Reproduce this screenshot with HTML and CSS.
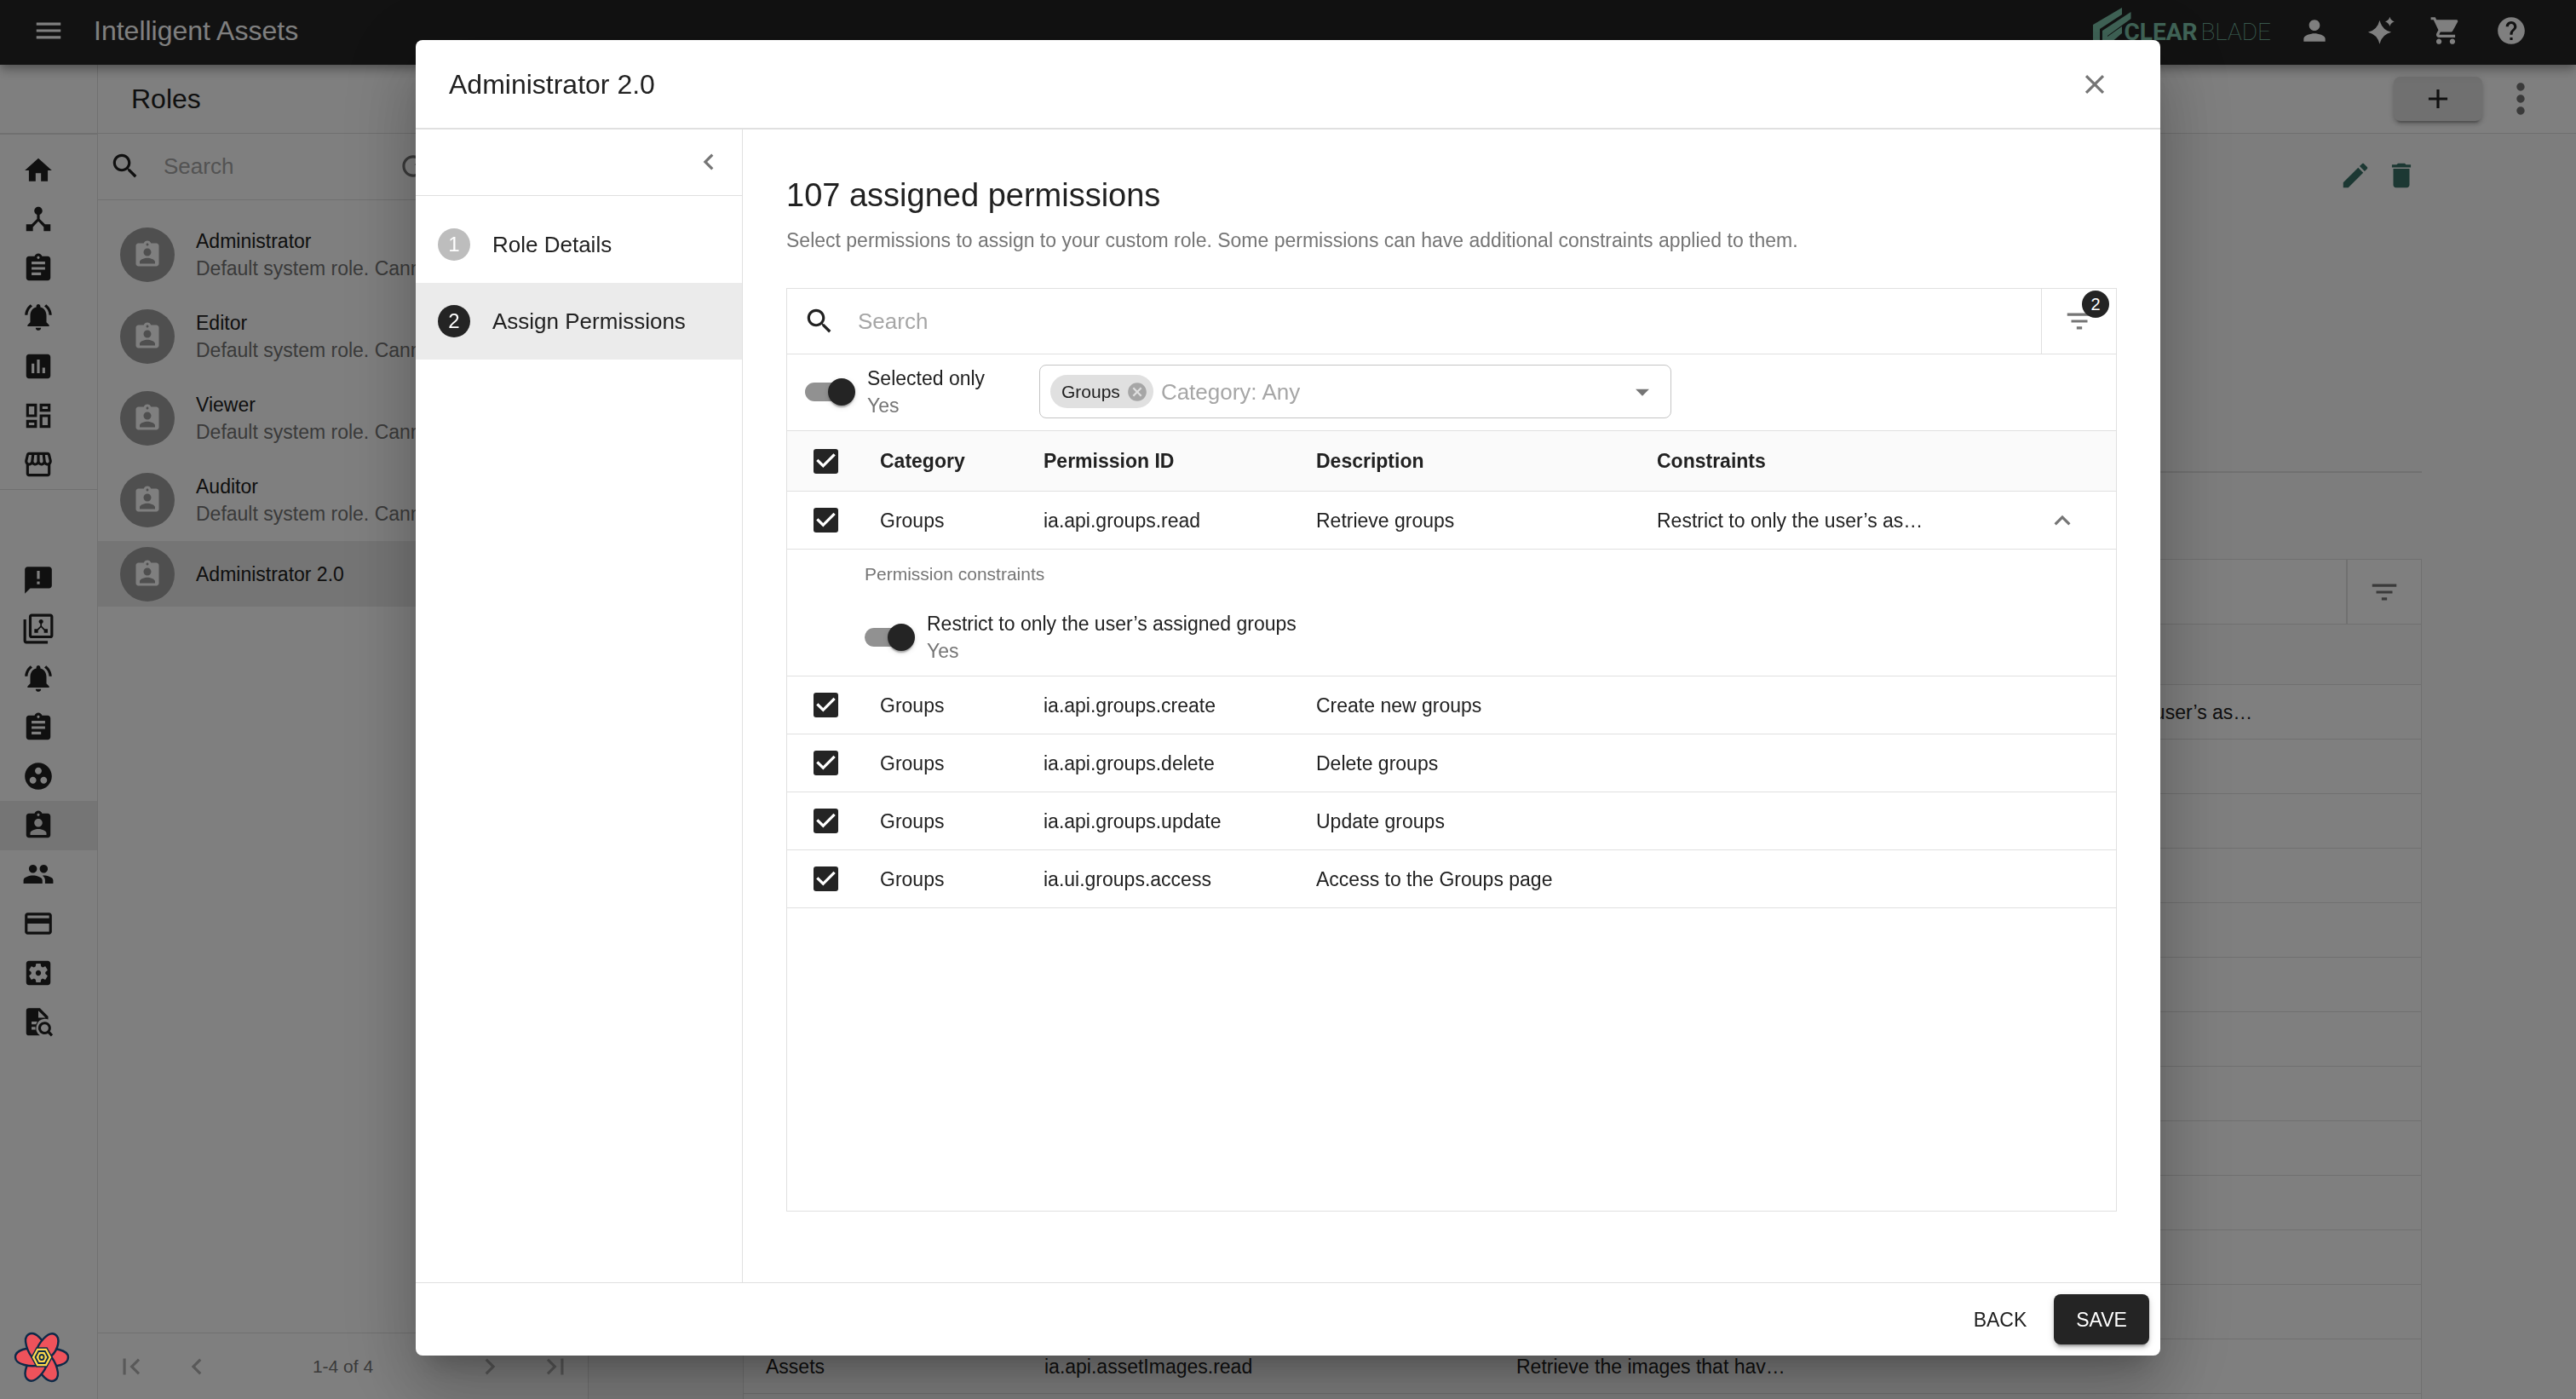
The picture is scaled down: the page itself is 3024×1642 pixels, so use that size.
FILE: index.html
```html
<!DOCTYPE html>
<html lang="en">
<head>
<meta charset="utf-8">
<meta name="viewport" content="width=device-width, initial-scale=1">
<title>Roles - Intelligent Assets</title>
<link rel="stylesheet" href="styles.css">
</head>
<body>
<svg class="sprite" aria-hidden="true">
  <symbol id="i-menu" viewBox="0 0 24 24"><path d="M3 18h18v-2H3v2zm0-5h18v-2H3v2zm0-7v2h18V6H3z"/></symbol>
  <symbol id="i-home" viewBox="0 0 24 24"><path d="M10 20v-6h4v6h5v-8h3L12 3 2 12h3v8z"/></symbol>
  <symbol id="i-hub" viewBox="0 0 24 24"><path d="M17 16l-4-4V8.82C14.16 8.4 15 7.3 15 6c0-1.66-1.34-3-3-3S9 4.34 9 6c0 1.3.84 2.4 2 2.82V12l-4 4H3v5h5v-3.05l4-4.2 4 4.2V21h5v-5h-4z"/></symbol>
  <symbol id="i-assignment" viewBox="0 0 24 24"><path d="M19 3h-4.18C14.4 1.84 13.3 1 12 1c-1.3 0-2.4.84-2.82 2H5c-1.1 0-2 .9-2 2v14c0 1.1.9 2 2 2h14c1.1 0 2-.9 2-2V5c0-1.1-.9-2-2-2zm-7 0c.55 0 1 .45 1 1s-.45 1-1 1-1-.45-1-1 .45-1 1-1zm2 14H7v-2h7v2zm3-4H7v-2h10v2zm0-4H7V7h10v2z"/></symbol>
  <symbol id="i-bell" viewBox="0 0 24 24"><path d="M7.58 4.08L6.15 2.65C3.75 4.48 2.17 7.3 2.03 10.5h2c.15-2.65 1.51-4.97 3.55-6.42zm12.39 6.42h2c-.15-3.2-1.73-6.02-4.12-7.85l-1.42 1.43c2.02 1.45 3.39 3.77 3.54 6.42zM18 11c0-3.07-1.64-5.64-4.5-6.32V4c0-.83-.67-1.5-1.5-1.5s-1.5.67-1.5 1.5v.68C7.63 5.36 6 7.92 6 11v5l-2 2v1h16v-1l-2-2v-5zm-6 11c.14 0 .27-.01.4-.04.65-.14 1.18-.58 1.44-1.18.1-.24.15-.5.15-.78h-4c.01 1.1.9 2 2.01 2z"/></symbol>
  <symbol id="i-chart" viewBox="0 0 24 24"><path d="M19 3H5c-1.1 0-2 .9-2 2v14c0 1.1.9 2 2 2h14c1.1 0 2-.9 2-2V5c0-1.1-.9-2-2-2zM9 17H7v-7h2v7zm4 0h-2V7h2v10zm4 0h-2v-4h2v4z"/></symbol>
  <symbol id="i-dashboard" viewBox="0 0 24 24"><path d="M19 5v2h-4V5h4M9 5v6H5V5h4m10 8v6h-4v-6h4M9 17v2H5v-2h4M21 3h-8v6h8V3zM11 3H3v10h8V3zm10 8h-8v10h8V11zm-10 4H3v6h8v-6z"/></symbol>
  <symbol id="i-store" viewBox="0 0 24 24"><path d="M21.9 8.89l-1.05-4.37c-.22-.9-1-1.52-1.91-1.52H5.05c-.9 0-1.69.63-1.9 1.52L2.1 8.89c-.24 1.02-.02 2.06.62 2.88.08.11.19.19.28.29V19c0 1.1.9 2 2 2h14c1.1 0 2-.9 2-2v-6.94c.09-.09.2-.18.28-.28.64-.82.87-1.87.62-2.89zm-2.99-3.9l1.05 4.37c.1.42.01.84-.25 1.17-.14.18-.44.47-.94.47-.61 0-1.14-.49-1.21-1.14L16.98 5l1.93-.01zM13 5h1.96l.54 4.52c.05.39-.07.78-.33 1.07-.22.26-.54.41-.95.41-.67 0-1.22-.59-1.22-1.31V5zM8.49 9.52L9.04 5H11v4.69c0 .72-.55 1.31-1.29 1.31-.34 0-.65-.15-.89-.41-.25-.29-.37-.68-.33-1.07zm-4.45-.16L5.05 5h1.97l-.58 4.86c-.08.65-.6 1.14-1.21 1.14-.49 0-.8-.29-.93-.47-.27-.32-.36-.75-.26-1.17zM5 19v-6.03c.08.01.15.03.23.03.87 0 1.66-.36 2.24-.95.6.6 1.4.95 2.31.95.87 0 1.65-.36 2.23-.93.59.57 1.39.93 2.29.93.84 0 1.64-.35 2.24-.95.58.59 1.37.95 2.24.95.08 0 .15-.02.23-.03V19H5z"/></symbol>
  <symbol id="i-feedback" viewBox="0 0 24 24"><path d="M20 2H4c-1.1 0-1.99.9-1.99 2L2 22l4-4h14c1.1 0 2-.9 2-2V4c0-1.1-.9-2-2-2zm-7 13h-2v-2h2v2zm0-4h-2V5h2v6z"/></symbol>
  <symbol id="i-hub-stack" viewBox="0 0 24 24"><path d="M3 5H1v16c0 1.1.9 2 2 2h16v-2H3V5zm18-4H7c-1.1 0-2 .9-2 2v14c0 1.1.9 2 2 2h14c1.1 0 2-.9 2-2V3c0-1.1-.9-2-2-2zm0 16H7V3h14v14z"/><path transform="translate(7.4 3.4) scale(.55)" d="M17 16l-4-4V8.82C14.16 8.4 15 7.3 15 6c0-1.66-1.34-3-3-3S9 4.34 9 6c0 1.3.84 2.4 2 2.82V12l-4 4H3v5h5v-3.05l4-4.2 4 4.2V21h5v-5h-4z"/></symbol>
  <symbol id="i-groups" viewBox="0 0 24 24"><path d="M12 2C6.48 2 2 6.48 2 12s4.48 10 10 10 10-4.48 10-10S17.52 2 12 2zM8 17.5c-1.38 0-2.5-1.12-2.5-2.5s1.12-2.5 2.5-2.5 2.5 1.12 2.5 2.5-1.12 2.5-2.5 2.5zM9.5 8c0-1.38 1.12-2.5 2.5-2.5s2.5 1.12 2.5 2.5-1.12 2.5-2.5 2.5S9.5 9.38 9.5 8zm6.5 9.5c-1.38 0-2.5-1.12-2.5-2.5s1.12-2.5 2.5-2.5 2.5 1.12 2.5 2.5-1.12 2.5-2.5 2.5z"/></symbol>
  <symbol id="i-role" viewBox="0 0 24 24"><path d="M19 3h-4.18C14.4 1.84 13.3 1 12 1c-1.3 0-2.4.84-2.82 2H5c-1.1 0-2 .9-2 2v14c0 1.1.9 2 2 2h14c1.1 0 2-.9 2-2V5c0-1.1-.9-2-2-2zm-7 0c.55 0 1 .45 1 1s-.45 1-1 1-1-.45-1-1 .45-1 1-1zm0 4c1.66 0 3 1.34 3 3s-1.34 3-3 3-3-1.34-3-3 1.34-3 3-3zm6 12H6v-1.4c0-2 4-3.1 6-3.1s6 1.1 6 3.1V19z"/></symbol>
  <symbol id="i-people" viewBox="0 0 24 24"><path d="M16 11c1.66 0 2.99-1.34 2.99-3S17.66 5 16 5c-1.66 0-3 1.34-3 3s1.34 3 3 3zm-8 0c1.66 0 2.99-1.34 2.99-3S9.66 5 8 5C6.34 5 5 6.34 5 8s1.34 3 3 3zm0 2c-2.33 0-7 1.17-7 3.5V19h14v-2.5c0-2.33-4.67-3.5-7-3.5zm8 0c-.29 0-.62.02-.97.05 1.16.84 1.97 1.97 1.97 3.45V19h6v-2.5c0-2.33-4.67-3.5-7-3.5z"/></symbol>
  <symbol id="i-card" viewBox="0 0 24 24"><path d="M20 4H4c-1.11 0-1.99.89-1.99 2L2 18c0 1.11.89 2 2 2h16c1.11 0 2-.89 2-2V6c0-1.11-.89-2-2-2zm0 14H4v-6h16v6zm0-10H4V6h16v2z"/></symbol>
  <symbol id="i-settings" viewBox="0 0 24 24"><path d="M12 10c-1.1 0-2 .9-2 2s.9 2 2 2 2-.9 2-2-.9-2-2-2zm7-7H5c-1.11 0-2 .9-2 2v14c0 1.1.89 2 2 2h14c1.11 0 2-.9 2-2V5c0-1.1-.89-2-2-2zm-1.75 9c0 .23-.02.46-.05.68l1.48 1.16c.13.11.17.3.08.45l-1.4 2.42c-.09.15-.27.21-.43.15l-1.74-.7c-.36.28-.76.51-1.18.69l-.26 1.85c-.03.17-.18.3-.35.3h-2.8c-.17 0-.32-.13-.35-.29l-.26-1.85c-.43-.18-.82-.41-1.18-.69l-1.74.7c-.16.06-.34 0-.43-.15l-1.4-2.42c-.09-.15-.05-.34.08-.45l1.48-1.16c-.03-.23-.05-.46-.05-.69 0-.23.02-.46.05-.68l-1.48-1.16c-.13-.11-.17-.3-.08-.45l1.4-2.42c.09-.15.27-.21.43-.15l1.74.7c.36-.28.76-.51 1.18-.69l.26-1.85c.03-.17.18-.3.35-.3h2.8c.17 0 .32.13.35.29l.26 1.85c.43.18.82.41 1.18.69l1.74-.7c.16-.06.34 0 .43.15l1.4 2.42c.09.15.05.34-.08.45l-1.48 1.16c.03.23.05.46.05.69z"/></symbol>
  <symbol id="i-audit" viewBox="0 0 24 24"><path fill-rule="evenodd" d="M5 2h8.2L19.3 8.2v2.2a7 7 0 0 0-2.6-.4 6.8 6.8 0 0 0-3.5 12.3H5a2 2 0 0 1-2-2V4a2 2 0 0 1 2-2zM12 4v5.2h5.3zM7 12v2h3.3l.9-2zM7 16v2h2.9l-.1-2z"/><path fill-rule="evenodd" d="M16.7 12.1a4.7 4.7 0 1 0 2.4 8.7l2.3 2.2 1.4-1.4-2.2-2.3a4.7 4.7 0 0 0-3.9-7.2zm0 1.9a2.8 2.8 0 1 1 0 5.6 2.8 2.8 0 0 1 0-5.6z"/></symbol>
  <symbol id="i-search" viewBox="0 0 24 24"><path d="M15.5 14h-.79l-.28-.27C15.41 12.59 16 11.11 16 9.5 16 5.91 13.09 3 9.5 3S3 5.91 3 9.5 5.91 16 9.5 16c1.61 0 3.09-.59 4.23-1.57l.27.28v.79l5 4.99L20.49 19l-4.99-5zm-6 0C7.01 14 5 11.99 5 9.5S7.01 5 9.5 5 14 7.01 14 9.5 11.99 14 9.5 14z"/></symbol>
  <symbol id="i-refresh" viewBox="0 0 24 24"><path d="M17.65 6.35C16.2 4.9 14.21 4 12 4c-4.42 0-7.99 3.58-7.99 8s3.57 8 7.99 8c3.73 0 6.84-2.55 7.73-6h-2.08c-.82 2.33-3.04 4-5.65 4-3.31 0-6-2.69-6-6s2.69-6 6-6c1.66 0 3.14.69 4.22 1.78L13 11h7V4l-2.35 2.35z"/></symbol>
  <symbol id="i-person" viewBox="0 0 24 24"><path d="M12 12c2.21 0 4-1.79 4-4s-1.79-4-4-4-4 1.79-4 4 1.79 4 4 4zm0 2c-2.67 0-8 1.34-8 4v2h16v-2c0-2.66-5.33-4-8-4z"/></symbol>
  <symbol id="i-sparkle" viewBox="0 0 24 24"><path d="M11.7 4.2q1.7 7.2 8.6 8.9-6.9 1.7-8.6 8.9-1.7-7.2-8.6-8.9 6.9-1.7 8.6-8.9zM19.2 1.8q.7 2.8 3.4 3.5-2.7.7-3.4 3.5-.7-2.8-3.4-3.5 2.7-.7 3.4-3.5z"/></symbol>
  <symbol id="i-cart" viewBox="0 0 24 24"><path d="M7 18c-1.1 0-1.99.9-1.99 2S5.9 22 7 22s2-.9 2-2-.9-2-2-2zM1 2v2h2l3.6 7.59-1.35 2.45c-.16.28-.25.61-.25.96 0 1.1.9 2 2 2h12v-2H7.42c-.14 0-.25-.11-.25-.25l.03-.12.9-1.63h7.45c.75 0 1.41-.41 1.75-1.03l3.58-6.49c.08-.14.12-.31.12-.48 0-.55-.45-1-1-1H5.21l-.94-2H1zm16 16c-1.1 0-1.99.9-1.99 2s.89 2 1.99 2 2-.9 2-2-.9-2-2-2z"/></symbol>
  <symbol id="i-help" viewBox="0 0 24 24"><path d="M12 2C6.48 2 2 6.48 2 12s4.48 10 10 10 10-4.48 10-10S17.52 2 12 2zm1 17h-2v-2h2v2zm2.07-7.75l-.9.92C13.45 12.9 13 13.5 13 15h-2v-.5c0-1.1.45-2.1 1.17-2.83l1.24-1.26c.37-.36.59-.86.59-1.41 0-1.1-.9-2-2-2s-2 .9-2 2H8c0-2.21 1.79-4 4-4s4 1.79 4 4c0 .88-.36 1.68-.93 2.25z"/></symbol>
  <symbol id="i-add" viewBox="0 0 24 24"><path d="M19 13h-6v6h-2v-6H5v-2h6V5h2v6h6v2z"/></symbol>
  <symbol id="i-more" viewBox="0 0 24 24"><path d="M12 8c1.1 0 2-.9 2-2s-.9-2-2-2-2 .9-2 2 .9 2 2 2zm0 2c-1.1 0-2 .9-2 2s.9 2 2 2 2-.9 2-2-.9-2-2-2zm0 6c-1.1 0-2 .9-2 2s.9 2 2 2 2-.9 2-2-.9-2-2-2z"/></symbol>
  <symbol id="i-edit" viewBox="0 0 24 24"><path d="M3 17.25V21h3.75L17.81 9.94l-3.75-3.75L3 17.25zM20.71 7.04c.39-.39.39-1.02 0-1.41l-2.34-2.34c-.39-.39-1.02-.39-1.41 0l-1.83 1.83 3.75 3.75 1.83-1.83z"/></symbol>
  <symbol id="i-delete" viewBox="0 0 24 24"><path d="M6 19c0 1.1.9 2 2 2h8c1.1 0 2-.9 2-2V7H6v12zM19 4h-3.5l-1-1h-5l-1 1H5v2h14V4z"/></symbol>
  <symbol id="i-close" viewBox="0 0 24 24"><path d="M19 6.41L17.59 5 12 10.59 6.41 5 5 6.41 10.59 12 5 17.59 6.41 19 12 13.41 17.59 19 19 17.59 13.41 12z"/></symbol>
  <symbol id="i-left" viewBox="0 0 24 24"><path d="M15.41 7.41L14 6l-6 6 6 6 1.41-1.41L10.83 12z"/></symbol>
  <symbol id="i-right" viewBox="0 0 24 24"><path d="M10 6L8.59 7.41 13.17 12l-4.58 4.59L10 18l6-6z"/></symbol>
  <symbol id="i-first" viewBox="0 0 24 24"><path d="M18.41 16.59L13.82 12l4.59-4.59L17 6l-6 6 6 6zM6 6h2v12H6z"/></symbol>
  <symbol id="i-last" viewBox="0 0 24 24"><path d="M5.59 7.41L10.18 12l-4.59 4.59L7 18l6-6-6-6zM16 6h2v12h-2z"/></symbol>
  <symbol id="i-up" viewBox="0 0 24 24"><path d="M12 8l-6 6 1.41 1.41L12 10.83l4.59 4.58L18 14z"/></symbol>
  <symbol id="i-drop" viewBox="0 0 24 24"><path d="M7 10l5 5 5-5z"/></symbol>
  <symbol id="i-filter" viewBox="0 0 24 24"><path d="M10 18h4v-2h-4v2zM3 6v2h18V6H3zm3 7h12v-2H6v2z"/></symbol>
  <symbol id="i-cancel" viewBox="0 0 24 24"><path d="M12 2C6.47 2 2 6.47 2 12s4.47 10 10 10 10-4.47 10-10S17.53 2 12 2zm5 13.59L15.59 17 12 13.41 8.41 17 7 15.59 10.59 12 7 8.41 8.41 7 12 10.59 15.59 7 17 8.41 13.41 12 17 15.59z"/></symbol>
</svg>

<div class="app">
  <header class="appbar">
    <button class="icon-btn" type="button" aria-label="Menu"><svg class="icon"><use href="#i-menu"/></svg></button>
    <h1 class="appbar-title">Intelligent Assets</h1>
    <a class="brand" href="#">
      <svg class="brand-mark" viewBox="0 0 46 46" aria-hidden="true"><path d="M34 0v8L8 25v21H0V20zM44.5 5v8L17 33v13h-6V27zM34 22v8L20 42v4h-3V34z"/></svg>
      <span class="brand-name"><b>CLEAR</b><span>BLADE</span></span>
    </a>
    <div class="appbar-actions">
      <button class="icon-btn" type="button" aria-label="Account"><svg class="icon"><use href="#i-person"/></svg></button>
      <button class="icon-btn" type="button" aria-label="Assistant"><svg class="icon"><use href="#i-sparkle"/></svg></button>
      <button class="icon-btn" type="button" aria-label="Cart"><svg class="icon"><use href="#i-cart"/></svg></button>
      <button class="icon-btn" type="button" aria-label="Help"><svg class="icon"><use href="#i-help"/></svg></button>
    </div>
  </header>

  <nav class="rail" aria-label="Main">
    <div class="rail-head"></div>
    <div class="rail-group rail-group-top">
      <a href="#" aria-label="Home"><svg class="icon"><use href="#i-home"/></svg></a>
      <a href="#" aria-label="Assets"><svg class="icon"><use href="#i-hub"/></svg></a>
      <a href="#" aria-label="Tasks"><svg class="icon"><use href="#i-assignment"/></svg></a>
      <a href="#" aria-label="Events"><svg class="icon"><use href="#i-bell"/></svg></a>
      <a href="#" aria-label="Reports"><svg class="icon"><use href="#i-chart"/></svg></a>
      <a href="#" aria-label="Dashboards"><svg class="icon"><use href="#i-dashboard"/></svg></a>
      <a href="#" aria-label="Marketplace"><svg class="icon"><use href="#i-store"/></svg></a>
    </div>
    <div class="rail-group rail-group-admin">
      <a href="#" aria-label="Feedback"><svg class="icon"><use href="#i-feedback"/></svg></a>
      <a href="#" aria-label="Asset types"><svg class="icon"><use href="#i-hub-stack"/></svg></a>
      <a href="#" aria-label="Event types"><svg class="icon"><use href="#i-bell"/></svg></a>
      <a href="#" aria-label="Task types"><svg class="icon"><use href="#i-assignment"/></svg></a>
      <a href="#" aria-label="Groups"><svg class="icon"><use href="#i-groups"/></svg></a>
      <a href="#" aria-label="Roles" aria-current="page"><svg class="icon"><use href="#i-role"/></svg></a>
      <a href="#" aria-label="Users"><svg class="icon"><use href="#i-people"/></svg></a>
      <a href="#" aria-label="Billing"><svg class="icon"><use href="#i-card"/></svg></a>
      <a href="#" aria-label="Settings"><svg class="icon"><use href="#i-settings"/></svg></a>
      <a href="#" aria-label="Audit"><svg class="icon"><use href="#i-audit"/></svg></a>
    </div>
  </nav>

  <main class="workspace">
    <div class="page-head">
      <h2>Roles</h2>
      <button class="add-btn" type="button" aria-label="Add role"><svg class="icon"><use href="#i-add"/></svg></button>
      <button class="more-btn" type="button" aria-label="More"><svg class="icon icon-xl"><use href="#i-more"/></svg></button>
    </div>

    <section class="roles" aria-label="Roles">
      <div class="roles-search">
        <svg class="icon"><use href="#i-search"/></svg>
        <input class="search-input" type="search" placeholder="Search" aria-label="Search roles">
        <button class="icon-btn muted" type="button" aria-label="Refresh"><svg class="icon"><use href="#i-refresh"/></svg></button>
      </div>
      <ul class="role-list">
        <li><span class="avatar"><svg><use href="#i-role"/></svg></span><div><p>Administrator</p><p class="sub">Default system role. Cannot</p></div></li>
        <li><span class="avatar"><svg><use href="#i-role"/></svg></span><div><p>Editor</p><p class="sub">Default system role. Cannot</p></div></li>
        <li><span class="avatar"><svg><use href="#i-role"/></svg></span><div><p>Viewer</p><p class="sub">Default system role. Cannot</p></div></li>
        <li><span class="avatar"><svg><use href="#i-role"/></svg></span><div><p>Auditor</p><p class="sub">Default system role. Cannot</p></div></li>
        <li class="selected"><span class="avatar"><svg><use href="#i-role"/></svg></span><div><p>Administrator 2.0</p></div></li>
      </ul>
      <div class="pager">
        <button type="button" aria-label="First page"><svg class="icon"><use href="#i-first"/></svg></button>
        <button type="button" aria-label="Previous page"><svg class="icon"><use href="#i-left"/></svg></button>
        <span>1-4 of 4</span>
        <button type="button" aria-label="Next page"><svg class="icon"><use href="#i-right"/></svg></button>
        <button type="button" aria-label="Last page"><svg class="icon"><use href="#i-last"/></svg></button>
      </div>
    </section>

    <section class="detail" aria-label="Role">
      <div class="detail-summary">
        <button type="button" aria-label="Edit role"><svg class="icon"><use href="#i-edit"/></svg></button>
        <button type="button" aria-label="Delete role"><svg class="icon"><use href="#i-delete"/></svg></button>
      </div>
      <div class="detail-panel">
        <div class="detail-tools">
          <button type="button" aria-label="Filter"><svg class="icon"><use href="#i-filter"/></svg></button>
        </div>
        <table class="detail-table">
          <colgroup><col class="d-cat"><col class="d-id"><col class="d-desc"><col></colgroup>
          <thead><tr><th></th><th></th><th></th><th></th></tr></thead>
          <tbody>
            <tr><td></td><td></td><td></td><td>Restrict to only the user’s as…</td></tr>
            <tr><td></td><td></td><td></td><td></td></tr>
            <tr><td></td><td></td><td></td><td></td></tr>
            <tr><td></td><td></td><td></td><td></td></tr>
            <tr><td></td><td></td><td></td><td></td></tr>
            <tr><td></td><td></td><td></td><td></td></tr>
            <tr><td></td><td></td><td></td><td></td></tr>
            <tr><td></td><td></td><td></td><td></td></tr>
            <tr><td></td><td></td><td></td><td></td></tr>
            <tr><td></td><td></td><td></td><td></td></tr>
            <tr><td></td><td></td><td></td><td></td></tr>
            <tr><td></td><td></td><td></td><td></td></tr>
            <tr><td>Assets</td><td>ia.api.assetImages.read</td><td>Retrieve the images that hav…</td><td></td></tr>
            <tr><td></td><td></td><td></td><td></td></tr>
          </tbody>
        </table>
      </div>
    </section>
  </main>
</div>

<div class="backdrop">
  <section class="dialog" role="dialog" aria-modal="true" aria-labelledby="dialog-title">
    <header class="dialog-head">
      <h2 id="dialog-title">Administrator 2.0</h2>
      <button class="icon-btn muted" type="button" aria-label="Close"><svg class="icon"><use href="#i-close"/></svg></button>
    </header>

    <div class="dialog-body">
      <aside class="steps">
        <div class="steps-head"><button class="icon-btn muted" type="button" aria-label="Collapse"><svg class="icon"><use href="#i-left"/></svg></button></div>
        <ol>
          <li><button type="button"><span class="step-no">1</span>Role Details</button></li>
          <li class="active"><button type="button" aria-current="step"><span class="step-no">2</span>Assign Permissions</button></li>
        </ol>
      </aside>

      <div class="content">
        <h3>107 assigned permissions</h3>
        <p class="lead">Select permissions to assign to your custom role. Some permissions can have additional constraints applied to them.</p>

        <div class="panel">
          <div class="panel-search">
            <svg class="icon"><use href="#i-search"/></svg>
            <input class="search-input" type="search" placeholder="Search" aria-label="Search permissions">
            <button class="filter-btn muted" type="button" aria-label="Filters, 2 active"><svg class="icon"><use href="#i-filter"/></svg><span class="badge">2</span></button>
          </div>

          <div class="panel-filters">
            <label class="toggle"><input class="switch" type="checkbox" checked><span class="toggle-text">Selected only<span class="value">Yes</span></span></label>
            <div class="combo">
              <span class="chip">Groups<button type="button" aria-label="Remove Groups"><svg><use href="#i-cancel"/></svg></button></span>
              <input type="text" role="combobox" aria-expanded="false" placeholder="Category: Any" aria-label="Category">
              <button class="combo-open muted" type="button" aria-label="Open"><svg class="icon"><use href="#i-drop"/></svg></button>
            </div>
          </div>

          <table class="perm-table">
            <colgroup><col class="c-check"><col class="c-cat"><col class="c-id"><col class="c-desc"><col><col class="c-expand"></colgroup>
            <thead>
              <tr><th><input class="check" type="checkbox" checked aria-label="Select all"></th><th>Category</th><th>Permission ID</th><th>Description</th><th>Constraints</th><th></th></tr>
            </thead>
            <tbody>
              <tr><td><input class="check" type="checkbox" checked aria-label="ia.api.groups.read"></td><td>Groups</td><td>ia.api.groups.read</td><td>Retrieve groups</td><td>Restrict to only the user’s as…</td><td><button class="icon-btn muted" type="button" aria-label="Hide constraints"><svg class="icon"><use href="#i-up"/></svg></button></td></tr>
              <tr>
                <td colspan="6" class="constraints">
                  <p class="caption">Permission constraints</p>
                  <label class="toggle"><input class="switch" type="checkbox" checked><span class="toggle-text">Restrict to only the user’s assigned groups<span class="value">Yes</span></span></label>
                </td>
              </tr>
              <tr><td><input class="check" type="checkbox" checked aria-label="ia.api.groups.create"></td><td>Groups</td><td>ia.api.groups.create</td><td>Create new groups</td><td></td><td></td></tr>
              <tr><td><input class="check" type="checkbox" checked aria-label="ia.api.groups.delete"></td><td>Groups</td><td>ia.api.groups.delete</td><td>Delete groups</td><td></td><td></td></tr>
              <tr><td><input class="check" type="checkbox" checked aria-label="ia.api.groups.update"></td><td>Groups</td><td>ia.api.groups.update</td><td>Update groups</td><td></td><td></td></tr>
              <tr><td><input class="check" type="checkbox" checked aria-label="ia.ui.groups.access"></td><td>Groups</td><td>ia.ui.groups.access</td><td>Access to the Groups page</td><td></td><td></td></tr>
            </tbody>
          </table>
        </div>
      </div>
    </div>

    <footer class="dialog-foot">
      <button class="btn" type="button">BACK</button>
      <button class="btn btn-primary" type="button">SAVE</button>
    </footer>
  </section>
</div>

<button class="devtools" type="button" aria-label="Open query devtools">
  <svg viewBox="-33 -33 66 66">
    <g fill="#ee525b" stroke="#0d2a48" stroke-width="2.4" stroke-linejoin="round">
      <path d="M2-9C12-12 31-9 31 0S16 12 7 9z"/>
      <path transform="rotate(60)" d="M2-9C12-12 31-9 31 0S16 12 7 9z"/>
      <path transform="rotate(120)" d="M2-9C12-12 31-9 31 0S16 12 7 9z"/>
      <path transform="rotate(180)" d="M2-9C12-12 31-9 31 0S16 12 7 9z"/>
      <path transform="rotate(240)" d="M2-9C12-12 31-9 31 0S16 12 7 9z"/>
      <path transform="rotate(300)" d="M2-9C12-12 31-9 31 0S16 12 7 9z"/>
    </g>
    <path fill="#ffd94c" stroke="#0d2a48" stroke-width="1.5" d="M-12 0L-6-11H6L12 0 6 11H-6z"/>
    <path fill="#ffd94c" stroke="#0d2a48" stroke-width="1.8" d="M-7.5 0L-3.8-7H3.8L7.5 0 3.8 7H-3.8z"/>
    <ellipse rx="2.6" ry="3" fill="#ffd94c" stroke="#0d2a48" stroke-width="1.8"/>
  </svg>
</button>
</body>
</html>
```

FILE: styles.css
```css
:root {
  --ink: #212121;
  --primary: #242424;
  --muted: #757575;
  --line: #e0e0e0;
  --selected: #ebebeb;
}

* { box-sizing: border-box; }

html, body { height: 100%; }

body {
  margin: 0;
  overflow: hidden;
  background: #fff;
  color: var(--ink);
  font: 23px/32px "Liberation Sans", Arial, sans-serif;
}

h1, h2, h3, p, ul, ol { margin: 0; padding: 0; font-weight: 400; }
ul, ol { list-style: none; }

button, input { font: inherit; color: inherit; margin: 0; }

button {
  display: flex;
  align-items: center;
  justify-content: center;
  padding: 0;
  border: 0;
  background: none;
}

table { width: 100%; border-collapse: separate; border-spacing: 0; table-layout: fixed; }
th, td { padding: 0; text-align: left; }

.sprite { position: absolute; width: 0; height: 0; }
.icon { display: block; flex: none; width: 38px; height: 38px; fill: currentColor; }
.icon-xl { width: 56px; height: 56px; }
.muted { color: var(--muted); }

.search-input {
  flex: 1;
  min-width: 0;
  padding: 0;
  border: 0;
  outline: 0;
  background: none;
  font-size: 26px;
}
::placeholder { color: #a6a6a6; opacity: 1; }

/* Application frame */
.app {
  display: grid;
  grid-template: 76px minmax(0, 1fr) / 115px minmax(0, 1fr);
  height: 100%;
}

.appbar {
  grid-column: 1 / -1;
  z-index: 1;
  display: flex;
  align-items: center;
  padding: 0 38px 4px;
  background: var(--primary);
  color: #fff;
  box-shadow: 0 4px 8px -2px rgba(0, 0, 0, .2), 0 8px 10px rgba(0, 0, 0, .14), 0 2px 20px rgba(0, 0, 0, .12);
}
.appbar-title { flex: 1; padding-left: 34px; font-size: 32px; line-height: 40px; }
.appbar-actions { display: flex; }
.appbar-actions .icon-btn { width: 77px; }

.brand { display: flex; align-items: flex-start; height: 54px; padding-right: 12px; color: #80c8ae; text-decoration: none; }
.brand-mark { width: 46px; height: 46px; margin-right: -10px; fill: currentColor; }
.brand-name { padding-top: 13px; font: 28px/32px Roboto, sans-serif; }
.brand-name span { padding-left: 4px; font-weight: 100; }

/* Navigation rail */
.rail { border-right: 1px solid var(--line); background: #fff; }
.rail-head { height: 82px; border-bottom: 2px solid var(--line); }
.rail-group { display: grid; grid-auto-rows: 1fr; }
.rail-group-top { height: 417px; padding-top: 13px; border-bottom: 1px solid var(--line); }
.rail-group-admin { height: 576px; margin-top: 77px; }
.rail a { display: flex; align-items: center; padding-left: 26px; color: var(--ink); }
.rail a[aria-current] { background: var(--selected); }

/* Page */
.workspace {
  display: grid;
  grid-template: 81px minmax(0, 1fr) / 576px minmax(0, 1fr);
  min-height: 0;
  background: #fff;
}
.page-head {
  grid-column: 1 / -1;
  display: flex;
  align-items: center;
  padding: 0 37px 0 39px;
  border-bottom: 1px solid var(--line);
}
.page-head h2 { flex: 1; font-size: 32px; line-height: 40px; }
.add-btn {
  width: 104px;
  height: 52px;
  margin-right: 17px;
  border-radius: 8px;
  background: var(--line);
  box-shadow: 0 6px 2px -4px rgba(0, 0, 0, .2), 0 4px 4px rgba(0, 0, 0, .14), 0 2px 10px rgba(0, 0, 0, .12);
}
.more-btn { color: var(--muted); }

.roles { display: flex; flex-direction: column; min-height: 0; border-right: 1px solid var(--line); }
.roles-search {
  display: flex;
  align-items: center;
  height: 78px;
  padding: 0 0 2px 13px;
  border-bottom: 1px solid var(--line);
}
.roles-search .search-input { flex: 0 1 274px; margin-left: 26px; }
.role-list { flex: 1; padding-top: 16px; }
.role-list li { display: flex; align-items: flex-start; height: 96px; padding: 16px 0 16px 26px; }
.role-list .selected { align-items: center; height: 77px; padding: 0 0 0 26px; background: var(--selected); }
.role-list p { white-space: nowrap; }
.role-list .sub { color: var(--muted); }
.avatar {
  display: grid;
  place-items: center;
  flex: none;
  width: 64px;
  height: 64px;
  margin-right: 25px;
  border-radius: 50%;
  background: #9e9e9e;
}
.avatar svg { width: 36px; height: 36px; fill: #fff; }

.pager {
  display: flex;
  align-items: center;
  height: 78px;
  border-top: 1px solid var(--line);
  color: var(--muted);
  font-size: 21px;
  text-align: center;
}
.pager span { flex: 1; }
.pager button { width: 77px; height: 48px; color: #b3b3b3; }

.detail { overflow: hidden; padding: 0 181px; background: #fafafa; }
.detail-summary {
  display: flex;
  align-items: flex-start;
  justify-content: flex-end;
  gap: 6px;
  height: 398px;
  padding-top: 30px;
  border-bottom: 2px solid var(--line);
  color: #387066;
}
.detail-summary button { width: 48px; }
.detail-panel { margin-top: 101px; border: 1px solid var(--line); background: #fff; }
.detail-tools { display: flex; justify-content: flex-end; height: 76px; border-bottom: 1px solid var(--line); }
.detail-tools button { width: 88px; border-left: 2px solid var(--line); color: var(--muted); }
.detail-table th { height: 71px; border-bottom: 1px solid var(--line); background: #fafafa; }
.detail-table td { height: 64px; padding-left: 26px; border-bottom: 1px solid var(--line); white-space: nowrap; }
.d-cat { width: 327px; }
.d-id { width: 554px; }
.d-desc { width: 552px; }

/* Dialog */
.backdrop {
  position: fixed;
  inset: 0;
  z-index: 2;
  display: flex;
  justify-content: center;
  padding: 47px 32px 51px;
  background: rgba(0, 0, 0, .5);
}
.dialog {
  display: flex;
  flex-direction: column;
  width: 100%;
  max-width: 2048px;
  border-radius: 8px;
  background: #fff;
  box-shadow: 0 22px 30px -14px rgba(0, 0, 0, .2), 0 48px 76px 6px rgba(0, 0, 0, .14), 0 18px 92px 16px rgba(0, 0, 0, .12);
}
.dialog-head {
  display: flex;
  align-items: center;
  justify-content: space-between;
  height: 105px;
  padding: 0 58px 0 39px;
  border-bottom: 2px solid var(--line);
}
.dialog-head h2 { font-size: 32px; line-height: 40px; }
.dialog-body { flex: 1; display: flex; min-height: 0; }

.steps { flex: none; width: 384px; border-right: 1px solid var(--line); }
.steps-head { display: flex; justify-content: flex-end; align-items: center; height: 78px; padding: 0 20px 2px 0; border-bottom: 1px solid var(--line); }
.steps ol { padding-top: 12px; }
.steps li button { justify-content: flex-start; gap: 26px; width: 100%; height: 90px; padding-left: 26px; font-size: 26px; }
.steps .active { background: var(--selected); }
.step-no {
  width: 38px;
  height: 38px;
  border-radius: 50%;
  background: #bdbdbd;
  color: #fff;
  font-size: 24px;
  line-height: 38px;
  text-align: center;
}
.active .step-no { background: var(--primary); }

.content { flex: 1; display: flex; flex-direction: column; min-width: 0; padding: 51px 51px 83px; }
.content h3 { font-size: 38px; line-height: 52px; }
.lead { margin: 11px 0 40px; color: var(--muted); }

.panel { flex: 1; border: 1px solid var(--line); }
.panel-search { display: flex; align-items: center; height: 77px; padding-left: 19px; border-bottom: 1px solid var(--line); }
.panel-search .search-input { margin-left: 26px; }
.filter-btn { position: relative; align-self: stretch; width: 88px; border-left: 1px solid var(--line); }
.badge {
  position: absolute;
  top: 2px;
  right: 8px;
  width: 32px;
  height: 32px;
  border-radius: 50%;
  background: var(--primary);
  color: #fff;
  font-size: 20px;
  text-align: center;
}
.panel-filters { display: flex; align-items: center; height: 90px; padding: 0 0 2px 21px; border-bottom: 1px solid var(--line); }
.panel-filters .toggle { width: 275px; }

.toggle { display: flex; align-items: center; gap: 14px; }
.toggle-text { display: flex; flex-direction: column; }
.value { color: var(--muted); }

.switch { appearance: none; display: grid; align-items: center; flex: none; width: 59px; height: 32px; }
.switch::before, .switch::after { content: ""; grid-area: 1 / 1; }
.switch::before { width: 54px; height: 22px; border-radius: 11px; background: #919191; }
.switch::after {
  justify-self: end;
  width: 32px;
  height: 32px;
  border-radius: 50%;
  background: var(--primary);
  box-shadow: 0 4px 2px -2px rgba(0, 0, 0, .2), 0 2px 2px rgba(0, 0, 0, .14), 0 2px 6px rgba(0, 0, 0, .12);
}

.combo {
  display: flex;
  align-items: center;
  flex: 0 1 742px;
  height: 63px;
  padding: 0 14px 0 12px;
  border: 1px solid #c4c4c4;
  border-radius: 8px;
}
.combo input { flex: 1; min-width: 0; padding: 0 0 0 9px; border: 0; outline: 0; background: none; font-size: 26px; }
.chip { display: flex; align-items: center; gap: 7px; height: 39px; padding: 0 6px 0 13px; border-radius: 20px; background: var(--line); font-size: 21px; }
.chip button { color: #a6a6a6; }
.chip svg { width: 26px; height: 26px; fill: currentColor; }

.perm-table th { height: 71px; border-bottom: 1px solid var(--line); background: #fafafa; font-weight: 700; }
.perm-table td { height: 68px; border-bottom: 1px solid var(--line); }
.perm-table th:first-child, .perm-table td:first-child { padding-left: 31px; }
.perm-table td.constraints:first-child { height: 149px; padding: 0 0 0 91px; }
.perm-table .icon-btn { width: 100%; }
.c-check { width: 109px; }
.c-cat { width: 192px; }
.c-id { width: 320px; }
.c-desc { width: 400px; }
.c-expand { width: 126px; }
.caption { margin-bottom: 26px; color: var(--muted); font-size: 21px; }

.check { appearance: none; display: block; width: 29px; height: 29px; border-radius: 3px; background: var(--primary); }
.check::before {
  content: "";
  display: block;
  height: 100%;
  background: #fff;
  clip-path: polygon(39% 78%, 11% 50%, 19% 42%, 39% 62%, 81% 20%, 89% 28%);
}

.dialog-foot { display: flex; align-items: center; justify-content: flex-end; gap: 8px; height: 86px; padding: 0 13px; border-top: 1px solid var(--line); }
.btn { width: 110px; height: 59px; border-radius: 8px; }
.btn-primary {
  width: 112px;
  background: var(--primary);
  color: #fff;
  box-shadow: 0 6px 2px -4px rgba(0, 0, 0, .2), 0 4px 4px rgba(0, 0, 0, .14), 0 2px 10px rgba(0, 0, 0, .12);
}

/* Floating devtools launcher */
.devtools { position: fixed; left: 16px; bottom: 16px; z-index: 3; width: 66px; height: 66px; }
.devtools svg { width: 66px; height: 66px; }
```
